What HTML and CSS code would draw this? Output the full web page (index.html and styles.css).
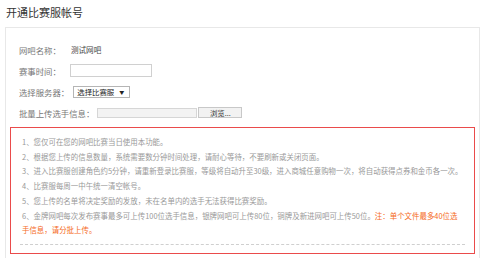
FILE: index.html
```html
<!DOCTYPE html>
<html>
<head>
    <title>开通比赛服帐号</title>
    <meta charset="UTF-8">
    <link rel="stylesheet" href="styles.css">
</head>
<body>
    <h1 class="page-title">开通比赛服帐号</h1>

    <div class="panel">
        <div class="form">
            <div class="row">
                <span class="label">网吧名称：</span>
                <span class="value">测试网吧</span>
            </div>
            <div class="row">
                <span class="label">赛事时间：</span>
                <input type="text" class="time-input">
            </div>
            <div class="row">
                <span class="label">选择服务器：</span>
                <div class="server-select">选择比赛服 <span class="arrow">▼</span></div>
            </div>
            <div class="row">
                <span class="label">批量上传选手信息：</span>
                <div class="file-box"></div>
                <button class="browse-btn">浏览...</button>
            </div>
        </div>

        <div class="tips">
            <ul>
                <li>1、您仅可在您的网吧比赛当日使用本功能。</li>
                <li>2、根据您上传的信息数量，系统需要数分钟时间处理，请耐心等待，不要刷新或关闭页面。</li>
                <li>3、进入比赛服创建角色约5分钟，请重新登录比赛服，等级将自动升至30级，进入商城任意购物一次，将自动获得点券和金币各一次。</li>
                <li>4、比赛服每周一中午统一清空帐号。</li>
                <li>5、您上传的名单将决定奖励的发放，未在名单内的选手无法获得比赛奖励。</li>
                <li>6、金牌网吧每次发布赛事最多可上传100位选手信息，银牌网吧可上传80位，铜牌及新进网吧可上传50位。<span class="note">注：单个文件最多40位选手信息，请分批上传。</span></li>
            </ul>
            <div class="dash"></div>
        </div>
    </div>
</body>
</html>
```

FILE: styles.css
```css
body {
    margin: 0;
    background-color: #fff;
    font-family: "Noto Sans CJK SC", "Liberation Sans", sans-serif;
    color: #666;
}

.page-title {
    margin: 0;
    height: 27px;
    padding-left: 6px;
    font-size: 11px;
    font-weight: normal;
    line-height: 24px;
    color: #333;
}

.panel {
    margin-left: 5px;
    border: 1px solid #e8e8e8;
    border-bottom: none;
    height: 240px;
}

.form {
    padding: 11px 0 0 13px;
}

.row {
    display: flex;
    align-items: center;
    height: 21px;
    font-size: 8.4px;
}

.label {
    color: #777;
}

.value {
    margin-left: 10px;
    font-size: 7.6px;
    color: #444;
}

.time-input {
    margin: 0 0 0 9px;
    padding: 0;
    width: 80px;
    height: 11px;
    border: 1px solid #d0d0d0;
}

.server-select {
    display: flex;
    align-items: center;
    margin-left: 4px;
    padding-left: 3px;
    width: 52px;
    height: 10px;
    border: 1px solid #b5b5b5;
    font-size: 7.4px;
    color: #222;
}

.server-select .arrow {
    margin-left: 5px;
    font-size: 5px;
}

.file-box {
    margin-left: 3px;
    width: 98px;
    height: 8px;
    border: 1px solid #d6d6d6;
    background-color: #f3f3f3;
}

.browse-btn {
    margin-left: 1px;
    padding: 0;
    width: 44px;
    height: 11px;
    border: 1px solid #c8c8c8;
    background-color: #f2f2f2;
    font-family: inherit;
    font-size: 7.4px;
    line-height: 9px;
    color: #333;
}

.tips {
    margin: 4px 4px 0;
    padding: 7px 11px 8px;
    border: 1px solid #ea4b4b;
}

.tips ul {
    margin: 0;
    padding: 0;
    list-style: none;
    font-size: 7.45px;
    line-height: 14.7px;
    color: #999;
}

.note {
    color: #f56a1c;
}

.dash {
    margin: 6px -2px 0;
    border-top: 1px dashed #cfcfcf;
}
```
